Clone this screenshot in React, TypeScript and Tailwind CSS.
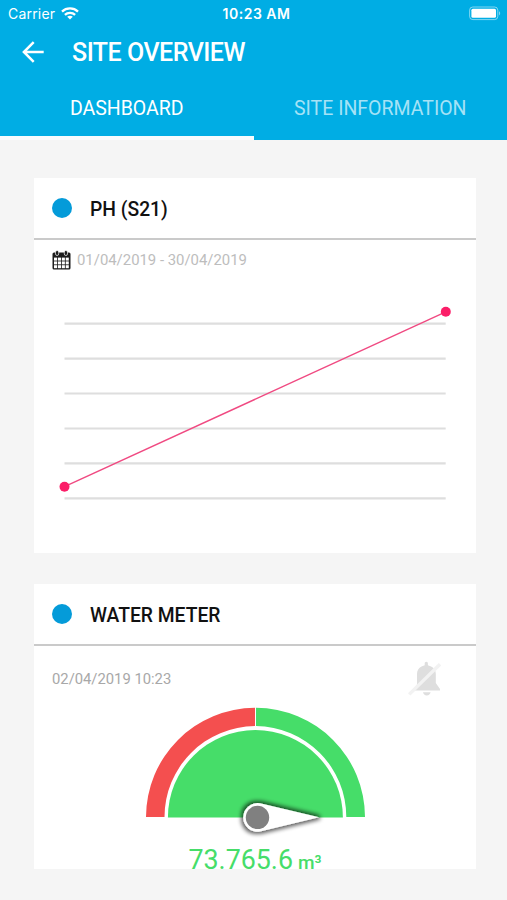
import type { ReactNode } from "react";

const gridLines = [23.7, 58.6, 93.5, 128.5, 163.4, 198.3];

function WifiIcon() {
  return (
    <svg width="18" height="13" viewBox="0 0 18 13" fill="none" stroke="white" strokeWidth="2.3">
      <path d="M1 4.6C5.4.4 12.6.4 17 4.6" />
      <path d="M3.9 7.8c2.8-2.7 7.4-2.7 10.2 0" />
      <path d="M9 12.5 6.2 9.8c1.5-1.4 4.1-1.4 5.6 0Z" fill="white" stroke="none" />
    </svg>
  );
}

function BatteryIcon() {
  return (
    <svg width="32" height="15" viewBox="0 0 32 15">
      <rect x="0.6" y="1" width="28.2" height="12.6" rx="3.2" fill="none" stroke="white" strokeOpacity="0.5" />
      <rect x="2.4" y="2.8" width="24.6" height="9" rx="1.5" fill="white" />
      <path d="M30 5.2c1.6.7 1.6 3.5 0 4.2Z" fill="white" fillOpacity="0.5" />
    </svg>
  );
}

function BackIcon() {
  return (
    <svg width="22" height="22" viewBox="0 0 22 22" fill="none" stroke="white" strokeWidth="2.5">
      <path d="M21.7 11H2M11.7 1.2 1.9 11l9.8 9.8" />
    </svg>
  );
}

function CalendarIcon() {
  return (
    <svg width="19" height="20" viewBox="0 0 19 20">
      <rect x="0.5" y="2.5" width="18" height="17" rx="1.5" fill="#1c1c1c" />
      {[7.6, 11.4, 15.2].map((y) =>
        [2, 5.9, 9.8, 13.7].map((x) => (
          <rect key={`${x}-${y}`} x={x} y={y} width="3.1" height="3" fill="white" />
        ))
      )}
      <rect x="3.5" y="0.5" width="3.2" height="5" rx="1.6" fill="#1c1c1c" stroke="white" strokeWidth="0.7" />
      <rect x="12.3" y="0.5" width="3.2" height="5" rx="1.6" fill="#1c1c1c" stroke="white" strokeWidth="0.7" />
    </svg>
  );
}

function BellOffIcon() {
  return (
    <svg width="34" height="36" viewBox="0 0 34 36">
      <path
        d="M18.3.8c1 0 1.6.7 1.6 1.7v1.8l3.2 1.2c3 1.4 4.7 4 4.7 7.2V22l4.2 6v1.5H6V28l3-4.5V12.7c0-3.2 1.7-5.8 4.5-7.2l3.2-1.2V2.5c0-1 .6-1.7 1.6-1.7Z"
        fill="#dedede"
      />
      <path d="M15 31.3h7.6c-.4 1.9-1.8 3.1-3.8 3.1s-3.5-1.2-3.8-3.1Z" fill="#dedede" />
      <path d="M1.2 33.4 32 3.2" stroke="#f2f2f2" strokeWidth="3.4" />
    </svg>
  );
}

function LineChart() {
  return (
    <svg width="442" height="253" viewBox="0 0 442 253" className="block">
      {gridLines.map((y) => (
        <path key={y} d={`M30.5 ${y}H411.7`} stroke="#dedede" strokeWidth="2.2" />
      ))}
      <path d="M30.5 186.7 411.8 11.8" stroke="#f04a82" strokeWidth="1.4" />
      <circle cx="30.5" cy="186.7" r="5" fill="#fb1e68" />
      <circle cx="411.8" cy="11.8" r="5" fill="#fb1e68" />
    </svg>
  );
}

function Gauge() {
  return (
    <svg width="222" height="138" viewBox="0 0 222 138" className="ml-[2px] block">
      <defs>
        <filter id="needle-shadow" x="-30%" y="-60%" width="160%" height="220%">
          <feMorphology in="SourceAlpha" operator="dilate" radius="2" />
          <feGaussianBlur stdDeviation="2" />
          <feComponentTransfer result="shadow">
            <feFuncA type="linear" slope="0.65" />
          </feComponentTransfer>
          <feMerge>
            <feMergeNode in="shadow" />
            <feMergeNode in="SourceGraphic" />
          </feMerge>
        </filter>
      </defs>
      <path d="M1 110A109.5 109.5 0 0 1 110 .7V19.1A91 91 0 0 0 19.5 110Z" fill="#f44f4f" />
      <path d="M111 .7A109.5 109.5 0 0 1 220 110H201.3A91 91 0 0 0 111 19.1Z" fill="#46dd69" />
      <path d="M22.9 110.6a87.5 87.5 0 0 1 175 0Z" fill="#46dd69" />
      <path
        d="M174 110.2 115 96.2A14.4 14.4 0 1 0 115 124.6Z"
        fill="white"
        filter="url(#needle-shadow)"
      />
      <circle cx="112.5" cy="110.4" r="11.7" fill="#808080" />
    </svg>
  );
}

function Card({ title, className, children }: { title: string; className: string; children: ReactNode }) {
  return (
    <section className={`ml-[34px] w-[442px] bg-white ${className}`}>
      <div className="flex h-[62px] items-center border-b-2 border-[#cacaca] pl-[18px]">
        <span className="size-5 rounded-full bg-[#049bd9]" />
        <h2 className="ml-[18px] pt-[4px] text-[19.3px] font-medium text-[#111]">{title}</h2>
      </div>
      {children}
    </section>
  );
}

export default function App() {
  return (
    <main className="flex h-[900px] w-[507px] flex-col overflow-hidden bg-[#f5f5f5] font-['Roboto',sans-serif]">
      <header className="h-[140px] shrink-0 bg-[#00ade4] text-white">
        <div className="grid h-[27px] grid-cols-3 items-center pr-[6px] pl-2 font-['Inter',sans-serif] text-[14px]">
          <div className="flex items-center gap-[6px] tracking-[0.2px]">
            <span>Carrier</span>
            <WifiIcon />
          </div>
          <span className="pl-1 text-center font-semibold tracking-[0.5px]">10:23 AM</span>
          <div className="flex justify-end">
            <BatteryIcon />
          </div>
        </div>
        <div className="flex h-[50px] items-center gap-[28px] pl-[22px]">
          <BackIcon />
          <h1 className="pt-[2px] text-[25px] font-medium tracking-[-0.5px]">SITE OVERVIEW</h1>
        </div>
        <nav className="grid h-[63px] grid-cols-2 text-[19.5px]">
          <button className="border-b-4 border-[#f7fcfe] pt-[5px]">DASHBOARD</button>
          <button className="border-b-4 border-transparent pt-[5px] text-[#a5e2f6]">SITE INFORMATION</button>
        </nav>
      </header>

      <Card title="PH (S21)" className="mt-[38px] h-[375px] shrink-0">
        <div className="flex h-[60px] items-start gap-[6px] pt-[10px] pl-[18px]">
          <CalendarIcon />
          <span className="text-[14.9px] leading-[21px] text-[#bdbdbd]">01/04/2019 - 30/04/2019</span>
        </div>
        <LineChart />
      </Card>

      <Card title="WATER METER" className="mt-[31px] h-[285px] shrink-0">
        <div className="flex h-[61px] items-center justify-between pt-[5px] pr-[34px] pl-[18px]">
          <span className="text-[14.8px] text-[#a8a8a8]">02/04/2019 10:23</span>
          <BellOffIcon />
        </div>
        <div className="flex flex-col items-center">
          <Gauge />
          <p className="flex items-baseline gap-[5px] text-[26.8px] leading-[30px] text-[#46dd69]">
            73.765.6 <span className="text-[19px] font-medium">m³</span>
          </p>
        </div>
      </Card>
    </main>
  );
}
